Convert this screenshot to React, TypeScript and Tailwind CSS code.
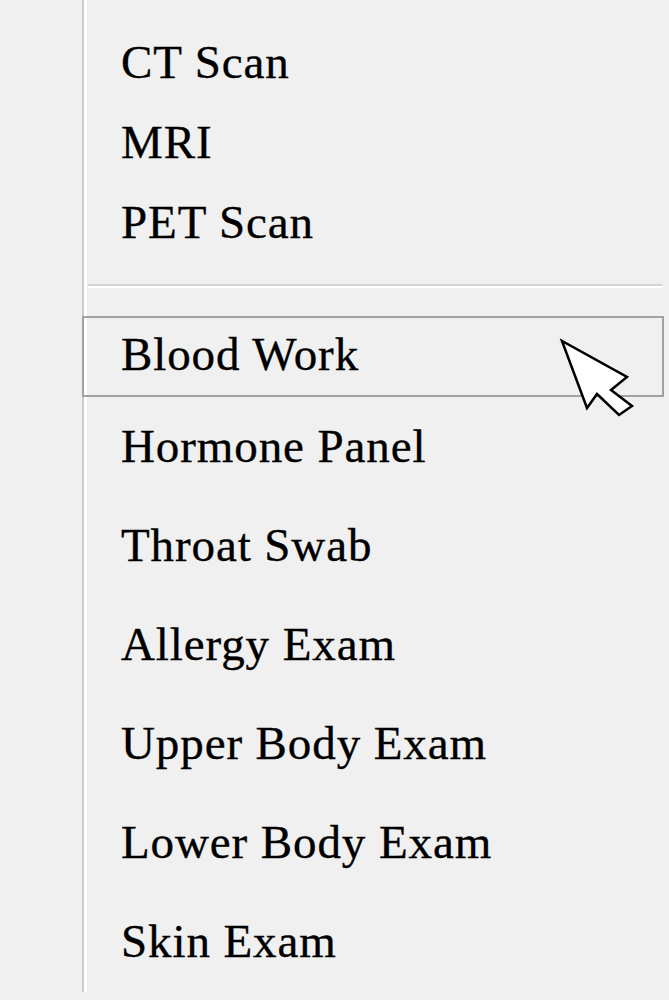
import React from "react";

const topItems = ["CT Scan", "MRI", "PET Scan"];
const lowerItems = [
  "Hormone Panel",
  "Throat Swab",
  "Allergy Exam",
  "Upper Body Exam",
  "Lower Body Exam",
  "Skin Exam",
];

export default function App() {
  return (
    <div
      className="relative w-[669px] h-[1000px] overflow-hidden bg-[#f0f0f0] text-black"
      style={{ fontFamily: '"Liberation Serif", "Times New Roman", serif' }}
    >
      {/* menu column with gutter line */}
      <div className="ml-[82px] w-[584px] h-[992px] border-l-2 border-[#cbcbcb] shadow-[inset_3px_0_0_#ffffff] text-[47px] tracking-[0.9px] [-webkit-text-stroke:0.35px_black]">
        <div className="pt-[22px]">
          {topItems.map((item) => (
            <div key={item} className="h-[80px] leading-[80px] pl-[37px] whitespace-nowrap">
              {item}
            </div>
          ))}
        </div>

        {/* separator */}
        <div className="mt-[22px] ml-[4px] mr-[4px]">
          <div className="h-[2px] bg-[#d4d4d4]" />
          <div className="h-[2px] bg-white" />
        </div>

        {/* hovered item */}
        <div className="mt-[28px] -ml-[2px] w-[582px] h-[81px] border-2 border-[#a2a2a2] leading-[73px] pl-[37px] whitespace-nowrap">
          Blood Work
        </div>

        {lowerItems.map((item) => (
          <div key={item} className="h-[99px] leading-[99px] pl-[37px] whitespace-nowrap">
            {item}
          </div>
        ))}
      </div>

      {/* mouse pointer */}
      <svg
        className="absolute left-0 top-0 pointer-events-none"
        width="669"
        height="1000"
        viewBox="0 0 669 1000"
      >
        <polygon
          points="562,341 587,408 597,394 619,415 632,406 611,390 627,377"
          fill="#ffffff"
          stroke="#000000"
          strokeWidth="2.5"
          strokeLinejoin="miter"
        />
      </svg>
    </div>
  );
}
